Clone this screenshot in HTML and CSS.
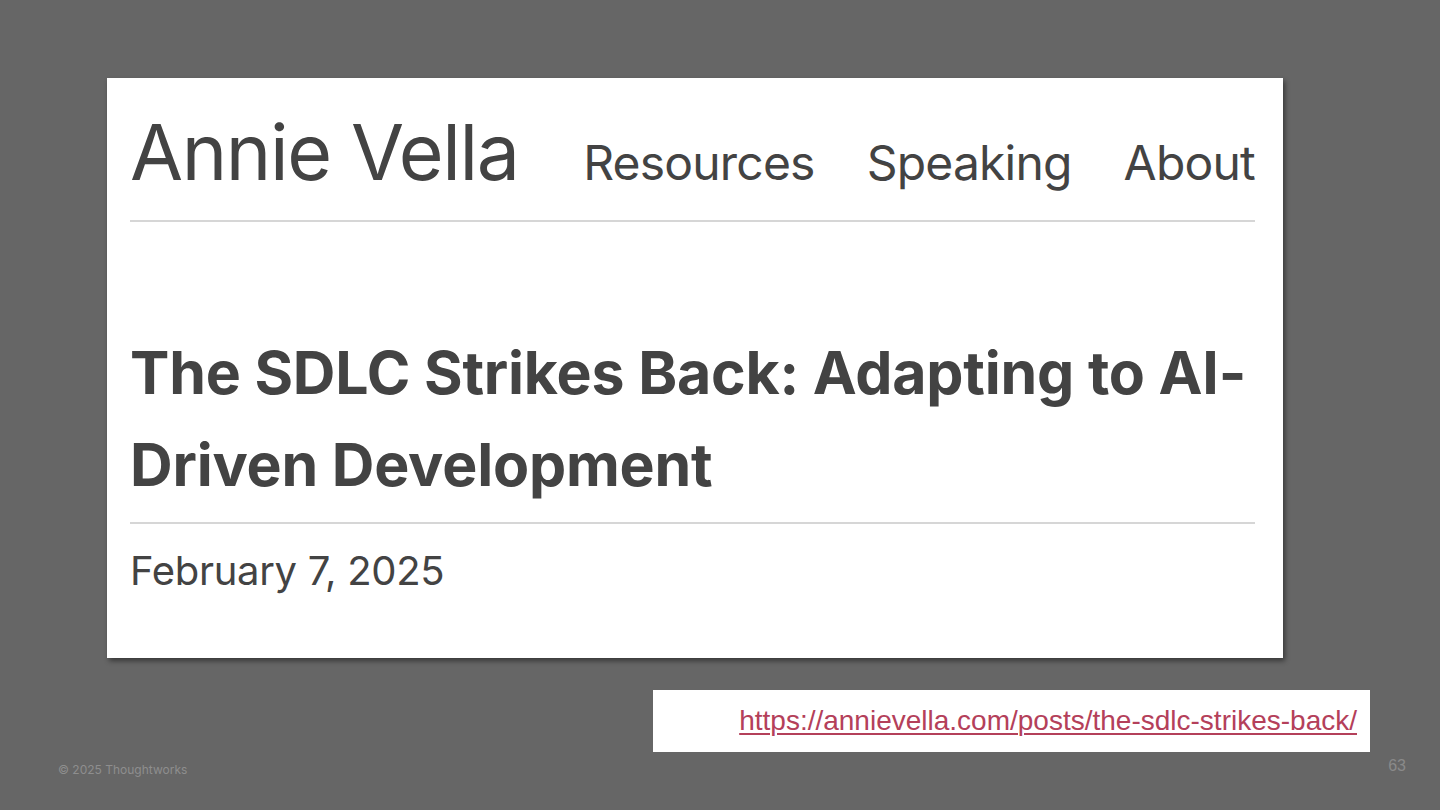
FILE: index.html
```html
<!DOCTYPE html>
<html>
<head>
<meta charset="utf-8">
<link rel="stylesheet" href="styles.css">
</head>
<body>
<div class="slide">
  <div class="card">
    <header class="site-header">
      <div class="site-title">Annie Vella</div>
      <nav class="site-nav">
        <span class="nav-item">Resources</span>
        <span class="nav-item">Speaking</span>
        <span class="nav-item">About</span>
      </nav>
    </header>
    <h1 class="post-title">The SDLC Strikes Back: Adapting to AI-Driven Development</h1>
    <div class="post-date">February 7, 2025</div>
  </div>
  <div class="link-row">
    <div class="link-box"><a class="link" href="#">https://annievella.com/posts/the-sdlc-strikes-back/</a></div>
  </div>
  <footer class="slide-footer">
    <span class="copyright">© 2025 Thoughtworks</span>
    <span class="page-num">63</span>
  </footer>
</div>
</body>
</html>
```
FILE: styles.css
```css
html, body {
  margin: 0;
  padding: 0;
}
body {
  background: #666666;
  font-family: Inter, "Noto Sans", sans-serif;
}
.slide {
  width: 1440px;
  height: 810px;
  box-sizing: border-box;
  padding-top: 78px;
  display: flex;
  flex-direction: column;
  overflow: hidden;
}
.card {
  margin-left: 107px;
  width: 1176px;
  height: 580px;
  box-sizing: border-box;
  background: #ffffff;
  padding: 0 28px 0 23px;
  box-shadow: 2px 3px 5px rgba(0, 0, 0, 0.45);
  color: #434343;
  display: flex;
  flex-direction: column;
}
.site-header {
  display: flex;
  align-items: flex-end;
  justify-content: space-between;
  height: 144px;
  flex-shrink: 0;
  box-sizing: border-box;
  padding-bottom: 29px;
  border-bottom: 2px solid #d6d6d6;
}
.site-title {
  font-size: 77px;
  line-height: 1;
  letter-spacing: -1.4px;
  font-weight: 400;
}
.site-nav {
  display: flex;
  gap: 52px;
  font-size: 48px;
  line-height: 1;
  letter-spacing: -0.8px;
  margin-bottom: 4px;
}
.post-title {
  margin: 105px 0 0 0;
  font-size: 59px;
  font-weight: 700;
  line-height: 92px;
  letter-spacing: -0.2px;
  padding-bottom: 11px;
  border-bottom: 2px solid #d6d6d6;
}
.post-date {
  margin-top: 23px;
  font-size: 40px;
  line-height: 48px;
  letter-spacing: -0.3px;
}
.link-row {
  display: flex;
  justify-content: flex-end;
  padding-right: 70px;
  margin-top: 32px;
}
.link-box {
  width: 717px;
  height: 62px;
  box-sizing: border-box;
  background: #ffffff;
  display: flex;
  justify-content: flex-end;
  align-items: center;
  padding-right: 13px;
}
.link {
  font-family: "Liberation Sans", Arial, sans-serif;
  font-size: 28px;
  color: #b4405a;
  text-decoration: underline;
  text-decoration-thickness: 2px;
  text-underline-offset: 3px;
}
.slide-footer {
  display: flex;
  justify-content: space-between;
  align-items: flex-start;
  padding: 5px 34px 0 58px;
}
.copyright {
  font-family: Inter, sans-serif;
  font-size: 12px;
  color: #8e8e8e;
  margin-top: 5px;
}
.page-num {
  font-family: "Liberation Sans", Arial, sans-serif;
  font-size: 16px;
  color: #8a8a8a;
}
```
